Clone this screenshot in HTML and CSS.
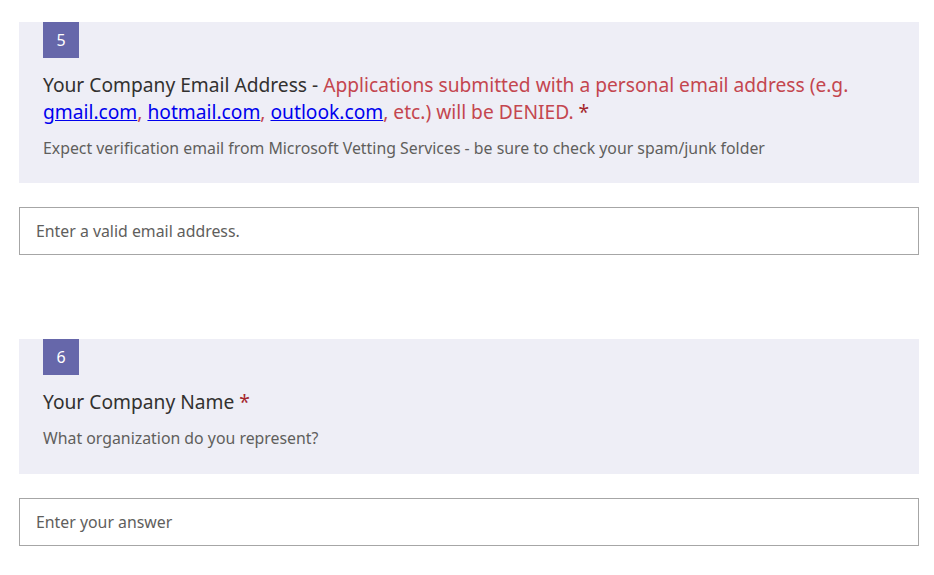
FILE: index.html
```html
<!DOCTYPE html>
<html lang="en">
<head>
<meta charset="utf-8">
<title>Form</title>
<link rel="stylesheet" href="styles.css">
</head>
<body>
<main class="form">
  <section class="question">
    <div class="q-head">
      <div class="badge">5</div>
      <div class="title">Your Company Email Address - <span class="warn">Applications submitted with a personal email address (e.g. <a href="#">gmail.com</a>, <a href="#">hotmail.com</a>, <a href="#">outlook.com</a>, etc.) will be DENIED.</span> <span class="req">*</span></div>
      <div class="desc">Expect verification email from Microsoft Vetting Services - be sure to check your spam/junk folder</div>
    </div>
    <div class="answer">Enter a valid email address.</div>
  </section>
  <section class="question">
    <div class="q-head q-short">
      <div class="badge">6</div>
      <div class="title">Your Company Name <span class="req">*</span></div>
      <div class="desc">What organization do you represent?</div>
    </div>
    <div class="answer">Enter your answer</div>
  </section>
</main>
</body>
</html>
```
FILE: styles.css
```css
html, body {
  margin: 0;
  padding: 0;
  background: #ffffff;
}
body {
  font-family: "Noto Sans", "Open Sans", sans-serif;
  color: #323130;
}
.form {
  padding: 22px 15px 0 19px;
  display: flex;
  flex-direction: column;
  gap: 84px;
}
.question {
  display: flex;
  flex-direction: column;
  gap: 24px;
}
.q-head {
  background: #eeeef6;
  padding: 0 24px 23px 24px;
  display: flex;
  flex-direction: column;
  align-items: flex-start;
}
.q-short {
  padding-bottom: 24px;
}
.badge {
  width: 36px;
  height: 36px;
  background: #6667aa;
  color: #ffffff;
  font-size: 16px;
  line-height: 36px;
  text-align: center;
}
.title {
  margin-top: 13px;
  font-size: 19.2px;
  line-height: 27px;
  color: #323130;
}
.warn {
  color: #c4464f;
}
.warn a {
  color: #0000ee;
  text-decoration: underline;
}
.req {
  color: #a4262c;
}
.desc {
  margin-top: 11px;
  font-size: 15.85px;
  line-height: 24px;
  color: #605e5c;
}
.answer {
  height: 46px;
  border: 1px solid #a6a6a6;
  padding: 0 16px;
  font-size: 15.85px;
  line-height: 46px;
  color: #605e5c;
}
```
